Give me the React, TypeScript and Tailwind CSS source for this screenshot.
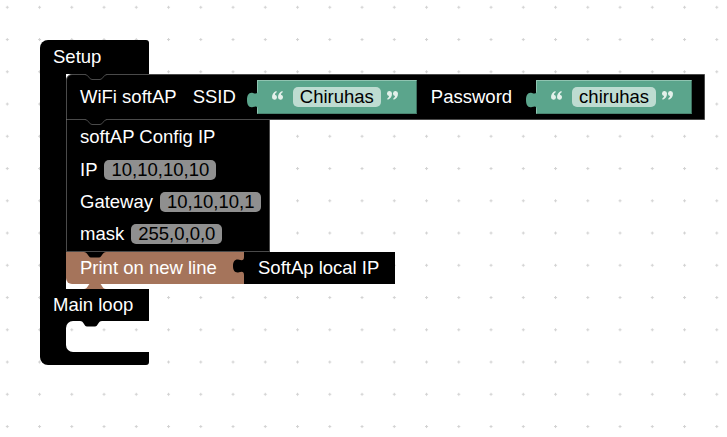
import React from 'react';

const font = "font-['Liberation_Sans',Arial,sans-serif]";

function Grid() {
  return (
    <svg className="absolute inset-0 h-full w-full" xmlns="http://www.w3.org/2000/svg">
      <defs>
        <pattern id="dots" x="5.8" y="5.8" width="32.25" height="32.25" patternUnits="userSpaceOnUse">
          <rect x="0" y="1" width="3" height="1" fill="#d2d2d2" />
          <rect x="1" y="0" width="1" height="3" fill="#d2d2d2" />
        </pattern>
      </defs>
      <rect width="100%" height="100%" fill="url(#dots)" />
    </svg>
  );
}

// rounded V notch used on statement connections
function Notch({ className, fill }: { className: string; fill: string }) {
  return (
    <svg className={'absolute ' + className} width="22" height="6" viewBox="0 0 22 6">
      <path d="M0,0 L22,0 C18,0 18,5.5 15,5.5 L7,5.5 C4,5.5 4,0 0,0 Z" fill={fill} />
    </svg>
  );
}

// notch on an outlined block: hides the straight border and draws the dip
function OutlineNotch({ className }: { className: string }) {
  return (
    <svg className={'absolute ' + className} width="22" height="7" viewBox="0 0 22 7">
      <rect x="1" y="0" width="20" height="1.2" fill="#000" />
      <path d="M0,0.5 C3.5,0.5 4,5.5 7,5.5 L15,5.5 C18,5.5 18.5,0.5 22,0.5" fill="none" stroke="#4a4a4a" />
    </svg>
  );
}

// puzzle tab of a value block, pointing left
function Tab({ className, fill }: { className: string; fill: string }) {
  return (
    <svg className={'absolute ' + className} width="11" height="20" viewBox="0 0 11 20" preserveAspectRatio="none">
      <path d="M11,0 C11,4 9,4 6,3 C2,2 0,5 0,10 C0,15 2,18 6,17 C9,16 11,16 11,20 Z" fill={fill} />
    </svg>
  );
}

// "6" shaped mark: blob at the bottom, tail rising to the right
const six = 'M0,6.3 C0,3.2 1.6,1.1 4.2,0 L4.9,1.1 C3.6,2 3,2.9 3,3.8 A2.5,2.5 0 1 1 0,6.3 Z';

function Quote({ close }: { close?: boolean }) {
  return (
    <svg className="-mt-[4px] shrink-0" width="11" height="9" viewBox="0 0 11 9">
      <g transform={close ? 'rotate(180 5.5 4.4)' : undefined}>
        <path d={six} fill="#e3f0ea" />
        <path d={six} fill="#e3f0ea" transform="translate(6,0)" />
      </g>
    </svg>
  );
}

function TextBlock({ value, className }: { value: string; className: string }) {
  return (
    <div
      className={
        'relative flex h-[34px] items-center border border-t-[#8fc4b1] border-l-[#8fc4b1] border-r-[#3d6f5e] border-b-[#4b8571] bg-[#5ba58c] pl-[14px] pr-[18px] ' +
        className
      }
    >
      <Tab className="-left-[11px] top-[9px]" fill="#5ba58c" />
      <Quote />
      <span className="ml-[10px] flex h-[20px] items-center rounded-[5px] bg-[#bedcd1] px-[7px] text-black">{value}</span>
      <span className="ml-[6px] flex">
        <Quote close />
      </span>
    </div>
  );
}

function Field({ value }: { value: string }) {
  return (
    <span className="ml-[7px] flex h-[20px] items-center rounded-[5px] bg-[#8f8f8f] px-[7px] text-black">{value}</span>
  );
}

export default function App() {
  return (
    <div className={'relative h-[437px] w-[727px] overflow-hidden bg-white text-[18.5px] text-white ' + font}>
      <Grid />

      {/* Setup / Main loop block */}
      <div className="absolute left-[40px] top-[40px] flex w-max flex-col">
        <div className="flex h-[34px] w-[109px] items-center rounded-tl-[8px] rounded-tr-[3px] bg-black pl-[13px]">Setup</div>

        <div className="flex">
          <div className="w-[26px] bg-black" />
          <div className="flex flex-col">
            {/* WiFi softAP */}
            <div className="relative flex h-[46px] items-center rounded-tl-[6px] border border-[#4a4a4a] bg-black pl-[13px] pr-[12px]">
              <OutlineNotch className="-top-[1px] left-[18px]" />
              <span>WiFi softAP</span>
              <span className="ml-[16px]">SSID</span>
              <TextBlock value="Chiruhas" className="ml-[21px]" />
              <span className="ml-[14px]">Password</span>
              <TextBlock value="chiruhas" className="ml-[24px]" />
            </div>

            {/* softAP Config IP */}
            <div className="relative flex w-[204px] flex-col border border-t-0 border-[#4a4a4a] bg-black pb-[1px] pl-[13px]">
              <OutlineNotch className="-top-[1px] left-[18px]" />
              <div className="flex h-[34px] items-center">softAP Config IP</div>
              <div className="flex h-[32px] items-center">
                IP <Field value="10,10,10,10" />
              </div>
              <div className="flex h-[32px] items-center">
                Gateway <Field value="10,10,10,1" />
              </div>
              <div className="flex h-[32px] items-center">
                mask <Field value="255,0,0,0" />
              </div>
            </div>

            {/* Print on new line */}
            <div className="flex h-[32px]">
              <div className="relative flex w-[178px] items-center rounded-bl-[6px] bg-[#a5745b] pl-[14px]">
                <Notch className="top-0 left-[18px]" fill="#000" />
                <span>Print on new line</span>
                <Notch className="-bottom-[5px] left-[18px] rotate-180" fill="#a5745b" />
              </div>
              <div className="relative flex items-center bg-black pl-[14px] pr-[16px]">
                <Tab className="-left-[11px] top-[5px] h-[18px]" fill="#000" />
                SoftAp local IP
              </div>
            </div>
            <div className="h-[5px]" />
          </div>
        </div>

        <div className="flex h-[32px] w-[109px] items-center bg-black pl-[13px]">Main loop</div>

        <div className="flex h-[31px] w-[109px]">
          <div className="w-[26px] bg-black" />
          <div className="relative flex-1 overflow-hidden">
            <div className="h-full w-[120px] rounded-l-[7px] shadow-[0_0_0_12px_#000]" />
            <Notch className="top-0 left-[14px]" fill="#000" />
          </div>
        </div>

        <div className="h-[13px] w-[109px] rounded-bl-[8px] rounded-br-[3px] bg-black" />
      </div>
    </div>
  );
}
